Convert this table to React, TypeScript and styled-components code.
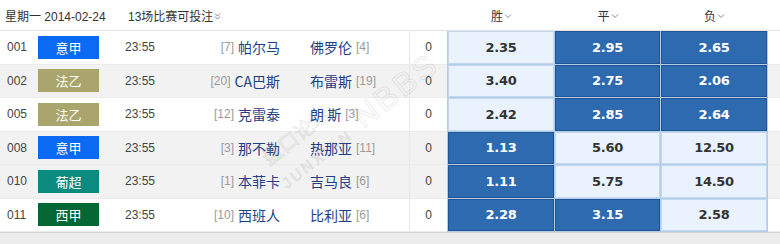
import React from 'react';
import styled, { createGlobalStyle } from 'styled-components';

const GlobalStyle = createGlobalStyle`
	html, body {
		margin: 0;
		padding: 0;
		background: #fff;
	}
	body {
		font-family: 'Liberation Sans', 'Noto Sans CJK SC', sans-serif;
		font-size: 12px;
		color: #333;
	}
`;

type League = 'seriea' | 'ligue2' | 'portugal' | 'laliga';

interface Match {
	no: string;
	league: League;
	leagueName: string;
	time: string;
	home: string;
	homeRank: number;
	away: string;
	awayRank: number;
	odds: [string, string, string];
	picked: [boolean, boolean, boolean];
}

const LEAGUE_COLORS: Record<League, string> = {
	seriea: '#0a6af3',
	ligue2: '#a9a56c',
	portugal: '#0b8a80',
	laliga: '#056733',
};

const matches: Match[] = [
	{ no: '001', league: 'seriea', leagueName: '意甲', time: '23:55', home: '帕尔马', homeRank: 7, away: '佛罗伦', awayRank: 4, odds: ['2.35', '2.95', '2.65'], picked: [false, true, true] },
	{ no: '002', league: 'ligue2', leagueName: '法乙', time: '23:55', home: 'CA巴斯', homeRank: 20, away: '布雷斯', awayRank: 19, odds: ['3.40', '2.75', '2.06'], picked: [false, true, true] },
	{ no: '005', league: 'ligue2', leagueName: '法乙', time: '23:55', home: '克雷泰', homeRank: 12, away: '朗 斯', awayRank: 3, odds: ['2.42', '2.85', '2.64'], picked: [false, true, true] },
	{ no: '008', league: 'seriea', leagueName: '意甲', time: '23:55', home: '那不勒', homeRank: 3, away: '热那亚', awayRank: 11, odds: ['1.13', '5.60', '12.50'], picked: [true, false, false] },
	{ no: '010', league: 'portugal', leagueName: '葡超', time: '23:55', home: '本菲卡', homeRank: 1, away: '吉马良', awayRank: 6, odds: ['1.11', '5.75', '14.50'], picked: [true, false, false] },
	{ no: '011', league: 'laliga', leagueName: '西甲', time: '23:55', home: '西班人', homeRank: 10, away: '比利亚', awayRank: 6, odds: ['2.28', '3.15', '2.58'], picked: [true, true, false] },
];

const shadedRows = [1, 3, 4];

export default function App() {
	return (
		<Page>
			<GlobalStyle />
			<Header>
				<DateCell>星期一 2014-02-24</DateCell>
				<CountCell>
					13场比赛可投注
					<DoubleChevron />
				</CountCell>
				<span />
				<OddsHead>
					胜<Chevron />
				</OddsHead>
				<OddsHead>
					平<Chevron />
				</OddsHead>
				<OddsHead>
					负<Chevron />
				</OddsHead>
				<span />
			</Header>
			<Body>
				{matches.map((m, i) => (
					<Row key={m.no} shaded={shadedRows.includes(i)}>
						<NoCell>{m.no}</NoCell>
						<LeagueCell>
							<LeagueBadge color={LEAGUE_COLORS[m.league]}>{m.leagueName}</LeagueBadge>
						</LeagueCell>
						<TimeCell>{m.time}</TimeCell>
						<HomeCell>
							<Rank>[{m.homeRank}]</Rank> <TeamName>{m.home}</TeamName>
						</HomeCell>
						<AwayCell>
							<TeamName>{m.away}</TeamName> <Rank>[{m.awayRank}]</Rank>
						</AwayCell>
						<HandicapCell>0</HandicapCell>
						{m.odds.map((o, j) => (
							<OddsCell key={j} picked={m.picked[j]}>
								{o}
							</OddsCell>
						))}
						<span />
					</Row>
				))}
				<Watermark>
					<WatermarkCn>盘口论坛</WatermarkCn>
					<WatermarkEn>
						<small>JUNXIAN</small> NBBS
					</WatermarkEn>
				</Watermark>
			</Body>
			<Footer />
		</Page>
	);
}

function Chevron() {
	return (
		<ChevronSvg width="8" height="6" viewBox="0 0 8 6">
			<path d="M1 1.5 L4 4.5 L7 1.5" fill="none" stroke="#888" strokeWidth="1" />
		</ChevronSvg>
	);
}

function DoubleChevron() {
	return (
		<ChevronSvg width="7" height="8" viewBox="0 0 7 8">
			<path d="M1 1.5 L3.5 4 L6 1.5 M1 4.5 L3.5 7 L6 4.5" fill="none" stroke="#888" strokeWidth="1" />
		</ChevronSvg>
	);
}

const COLUMNS = '38px 87px 65px 105px 114px 38px 107px 106px 107px 1fr';

const Page = styled.div`
	width: 780px;
	height: 244px;
	overflow: hidden;
	display: flex;
	flex-direction: column;
	background: #fff;
`;

const Header = styled.div`
	display: grid;
	grid-template-columns: 125px 265px 57px 107px 106px 107px 1fr;
	align-items: center;
	height: 30px;
	border-bottom: 1px solid #e3e3e3;
	color: #333;
	font-size: 12px;
`;

const DateCell = styled.div`
	padding-left: 5px;
	white-space: nowrap;
`;

const CountCell = styled.div`
	padding-left: 3px;
	display: flex;
	align-items: center;
	white-space: nowrap;
`;

const OddsHead = styled.div`
	display: flex;
	align-items: center;
	justify-content: center;
	padding-left: 2px;
	font-size: 12px;
`;

const ChevronSvg = styled.svg`
	margin-left: 1px;
	margin-top: 1px;
`;

const Body = styled.div`
	position: relative;
	overflow: hidden;
	display: flex;
	flex-direction: column;
`;

const Row = styled.div<{ shaded: boolean }>`
	display: grid;
	grid-template-columns: ${COLUMNS};
	align-items: stretch;
	height: 33.5px;
	background: ${({ shaded }) => (shaded ? '#f2f2f2' : '#fff')};
	border-bottom: 1px solid #ebebeb;
	box-sizing: border-box;
`;

const Cell = styled.div`
	display: flex;
	align-items: center;
	white-space: nowrap;
`;

const NoCell = styled(Cell)`
	padding-left: 7px;
	color: #444;
`;

const LeagueCell = styled(Cell)``;

const LeagueBadge = styled.span<{ color: string }>`
	display: flex;
	align-items: center;
	justify-content: center;
	width: 61px;
	height: 23px;
	background: ${({ color }) => color};
	color: #fff;
	font-size: 13px;
	font-family: 'Noto Sans CJK SC', sans-serif;
`;

const TimeCell = styled(Cell)`
	color: #444;
`;

const HomeCell = styled(Cell)`
	justify-content: flex-end;
	padding-right: 15px;
	gap: 4px;
`;

const AwayCell = styled(Cell)`
	padding-left: 15px;
	gap: 4px;
`;

const TeamName = styled.span`
	color: #233f86;
	font-size: 14px;
	font-family: 'Noto Sans CJK SC', sans-serif;
`;

const Rank = styled.span`
	color: #9a9a9a;
	font-size: 12px;
`;

const HandicapCell = styled(Cell)`
	justify-content: center;
	border-left: 1px solid #e6e6e6;
	color: #444;
`;

const OddsCell = styled(Cell)<{ picked: boolean }>`
	justify-content: center;
	box-sizing: border-box;
	font-weight: bold;
	font-size: 13px;
	font-family: 'DejaVu Sans', sans-serif;
	letter-spacing: -0.3px;
	color: ${({ picked }) => (picked ? '#fff' : '#333')};
	background: ${({ picked }) => (picked ? '#2e6ab0' : '#eaf3fd')};
	border: 1px solid ${({ picked }) => (picked ? '#1f5596' : '#c3d8ee')};
	box-shadow: 0 0 0 1px #b3cde8;
	margin: 0 0 0 1px;
`;

const Watermark = styled.div`
	position: absolute;
	left: 290px;
	top: 110px;
	transform: rotate(-38deg);
	transform-origin: left bottom;
	pointer-events: none;
	display: flex;
	flex-direction: column;
	align-items: flex-start;
	line-height: 1;
`;

const WatermarkCn = styled.span`
	font-family: 'Noto Sans CJK SC', sans-serif;
	font-size: 20px;
	color: transparent;
	-webkit-text-stroke: 1px rgba(120, 120, 120, 0.16);
`;

const WatermarkEn = styled.span`
	font-family: 'Liberation Sans', sans-serif;
	font-size: 32px;
	letter-spacing: 3px;
	color: transparent;
	-webkit-text-stroke: 1px rgba(120, 120, 120, 0.16);
	white-space: nowrap;

	small {
		font-size: 15px;
	}
`;

const Footer = styled.div`
	flex: 1;
	background: #ececec;
	border-top: 1px solid #d4d4d4;
`;
